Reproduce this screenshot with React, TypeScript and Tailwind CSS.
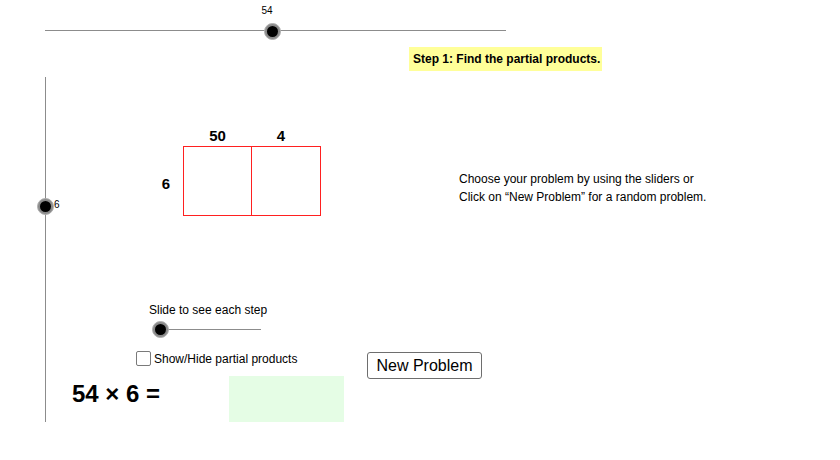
import React from "react";

// Knob of a GeoGebra-style slider
function Knob({ x, y }: { x: number; y: number }) {
  return (
    <div
      className="absolute w-[17px] h-[17px] -ml-[8.5px] -mt-[8.5px] rounded-full bg-[#8a8a8a] border border-[#b0b0b0] flex items-center justify-center"
      style={{ left: x, top: y }}
    >
      <div className="w-[11px] h-[11px] rounded-full bg-black" />
    </div>
  );
}

export default function App() {
  return (
    <div
      className="relative w-[840px] h-[460px] bg-white overflow-hidden text-black"
      style={{ fontFamily: '"Liberation Sans", Arial, sans-serif' }}
    >
      {/* horizontal slider (a) */}
      <div className="absolute left-[45px] top-[5px] w-[461px] flex flex-col">
        <div className="ml-[210px] w-[24px] text-center text-[10px] leading-[12px]">54</div>
        <div className="mt-[13px] h-px bg-[#8c8c8c]" />
      </div>
      <Knob x={272.5} y={31} />

      {/* step caption */}
      <div className="absolute left-[409px] top-[47px] w-[193px] h-[24px] bg-[#ffff99] flex items-center pl-[4px] text-[12px] font-bold">
        Step 1: Find the partial products.
      </div>

      {/* vertical slider (b) */}
      <div className="absolute left-[45px] top-[77px] w-px h-[345px] bg-[#8c8c8c]" />
      <Knob x={45.5} y={206} />
      <div className="absolute left-[54px] top-[199px] text-[10px] leading-[12px]">6</div>

      {/* area model */}
      <div className="absolute left-[158px] top-[128px] grid grid-cols-[25px_69px_69px] grid-rows-[18px_70px] text-[15px] leading-[15px] font-bold">
        <div />
        <div className="text-center">50</div>
        <div className="text-center pr-[11px]">4</div>
        <div className="flex items-center justify-end pr-[13px] pt-[4px]">6</div>
        <div className="border border-[#ff2020]" />
        <div className="border border-l-0 border-[#ff2020]" />
      </div>

      {/* instructions */}
      <div className="absolute left-[459px] top-[170px] text-[12px] leading-[18px]">
        <p>Choose your problem by using the sliders or</p>
        <p>Click on “New Problem” for a random problem.</p>
      </div>

      {/* step slider */}
      <div className="absolute left-[149px] top-[303px] flex flex-col">
        <span className="text-[12px] leading-[14px]">Slide to see each step</span>
        <div className="mt-[12px] ml-[11px] w-[101px] h-px bg-[#8c8c8c]" />
      </div>
      <Knob x={160.5} y={329.5} />

      {/* checkbox */}
      <label className="absolute left-[136px] top-[351px] flex items-center gap-[3px] text-[12px] leading-[14px]">
        <span className="w-[15px] h-[15px] rounded-[2px] border border-[#7a7a7a] bg-white" />
        <span>Show/Hide partial products</span>
      </label>

      {/* button */}
      <button className="absolute left-[367px] top-[352px] w-[115px] h-[27px] rounded-[3px] border border-[#6e6e6e] bg-white text-[16px] leading-none flex items-center justify-center">
        New Problem
      </button>

      {/* equation */}
      <div className="absolute left-[72px] top-[376px] flex items-start">
        <span className="mt-[5px] w-[157px] text-[24px] leading-[26px] font-bold">54 × 6 =</span>
        <span className="w-[115px] h-[46px] bg-[#e5fde5]" />
      </div>
    </div>
  );
}
